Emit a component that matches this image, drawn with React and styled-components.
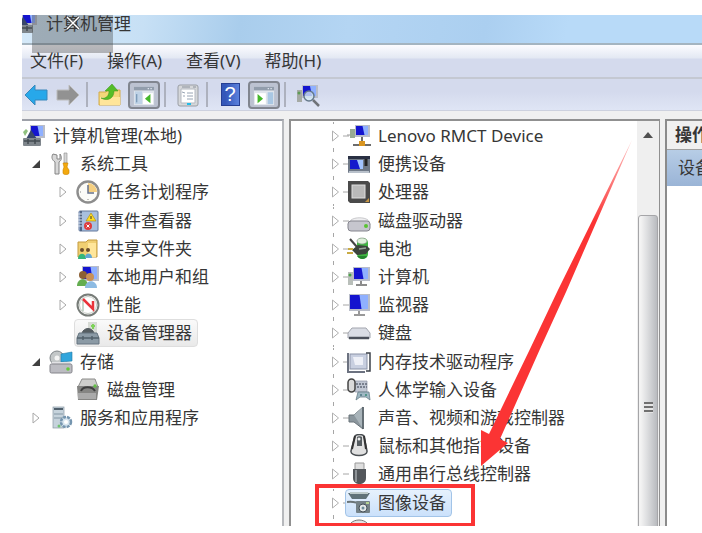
import React, { useState } from 'react';
import styled, { createGlobalStyle } from 'styled-components';

const Svg = ({ children, size = 24 }) => (
  <svg width={size} height={size} viewBox="0 0 24 24" fill="none" aria-hidden="true">{children}</svg>
);

// shared little monitor used by several device icons
const Monitor = ({ x = 8, y = 2, w = 15, h = 12 }) => (
  <g>
    <rect x={x} y={y} width={w} height={h} fill="#b9bdc9" />
    <rect x={x + 1} y={y + 1} width={w - 3} height={h - 3} fill="#1414cf" />
    <path d={`M${x + w / 2} ${y + 1}H${x + w - 2}V${y + h - 2}H${x + w / 2 + 2}z`} fill="#8fb0ff" />
  </g>
);

const icons = {
  computer: (
    <>
      <Monitor x={8} y={1} w={15} h={13} />
      <path d="M4 15l5-9 6 9z" fill="#39476a" />
      <path d="M1 8l3-3 2 2-3 5z" fill="#8fc07f" />
      <rect x="1" y="14" width="18" height="8" rx="1" fill="#7f868c" />
      <path d="M2 17h16M6 15v5M13 15v5" stroke="#444c52" strokeWidth="1.5" />
    </>
  ),
  tools: (
    <>
      <path d="M4 2c-2 3-1 6 2 8v12h4V10c3-2 3-5 1-8v5H8V3z" fill="#d8d8d8" stroke="#858585" />
      <path d="M15 1h3v10h-3z" fill="#d5d5d5" stroke="#8a8a8a" strokeWidth=".6" />
      <path d="M14 11h5l-1 4 2 3v3c0 2-6 2-6 0v-3l1-3z" fill="#f3a90e" stroke="#c98500" strokeWidth=".6" />
    </>
  ),
  clock: (
    <>
      <circle cx="12" cy="12" r="10.5" fill="#fbfbf7" stroke="#8d8d8d" strokeWidth="2.4" />
      <path d="M12 12V3a9 9 0 0 1 9 9z" fill="#f5cf80" />
      <path d="M12 5v8h6" stroke="#65718a" strokeWidth="1.5" />
      <path d="M4 12h1M12 19v1" stroke="#888" />
    </>
  ),
  events: (
    <>
      <rect x="3" y="2" width="19" height="20" rx="1" fill="#a8bfdf" stroke="#65799c" />
      <path d="M5 2v20" stroke="#526585" strokeWidth="2" />
      <path d="M2 5h4M2 8h4M2 11h4M2 14h4M2 17h4" stroke="#d6dfec" />
      <path d="M15 4l5 8H10z" fill="#ffdc22" stroke="#a9880b" strokeWidth=".6" />
      <path d="M15 7v3" stroke="#333" />
      <circle cx="12" cy="17" r="4" fill="#df3c3c" />
      <path d="M10.500 15.500l3 3m0-3l-3 3" stroke="#fff" />
    </>
  ),
  share: (
    <>
      <path d="M2 5h8l2-2h9v17H2z" fill="#f0cf72" stroke="#c49b3e" />
      <path d="M12 6h8v14h-8z" fill="#ffe69a" />
      <circle cx="6" cy="13" r="2" fill="#6b4d2c" />
      <circle cx="12" cy="13" r="2" fill="#6b4d2c" />
      <path d="M2 22c0-7 8-7 8 0z" fill="#35b67b" />
      <path d="M9 21c0-6 7-6 7 0z" fill="#63a7d2" />
    </>
  ),
  users: (
    <>
      <Monitor x={6} y={1} w={17} h={15} />
      <circle cx="7" cy="10" r="4" fill="#8c5f33" />
      <circle cx="14" cy="12" r="4" fill="#c99056" />
      <path d="M1 21c0-9 11-9 11 0z" fill="#64ad50" />
      <path d="M9 23c0-9 12-9 12 0z" fill="#8dbbe3" />
    </>
  ),
  performance: (
    <>
      <circle cx="12" cy="12" r="10.500" fill="#fff" stroke="#777c78" strokeWidth="2" />
      <circle cx="12" cy="12" r="8.500" stroke="#c5cbc4" />
      <path d="M7 18V7" stroke="#8fb19a" strokeWidth="1" />
      <path d="M7 6l10 10V8" stroke="#e9343b" strokeWidth="2.500" />
    </>
  ),
  deviceManager: (
    <>
      <rect x="12" y="1" width="9" height="11" fill="#d7dbd5" />
      <path d="M17 3v5M15 5h4" stroke="#7fd35a" strokeWidth="2" />
      <path d="M6 12c2-6 10-6 12 0" fill="#555d61" stroke="#555d61" />
      <path d="M3 12h18l2 5v6H1v-6z" fill="#8b9aa5" stroke="#667580" />
      <path d="M1 17h22M7 15v4M16 15v4" stroke="#53616b" strokeWidth="1.500" />
    </>
  ),
  storage: (
    <>
      <circle cx="8" cy="8" r="7" fill="#c3c7c8" stroke="#7f8588" />
      <circle cx="8" cy="8" r="2.500" fill="#f4f4f4" />
      <path d="M12 4l11-2v9l-11 1z" fill="#31a5dc" stroke="#227aa6" strokeWidth=".6" />
      <path d="M3 12h18l2 4H1z" fill="#e2e2e5" />
      <rect x="1" y="14" width="22" height="9" rx="1.500" fill="#bcbcc2" stroke="#85858b" />
      <circle cx="19" cy="19" r="1.800" fill="#65c93c" />
    </>
  ),
  diskManage: (
    <>
      <path d="M6 1h13l3 8H2z" fill="#cdcdcb" stroke="#8c8c8a" />
      <path d="M1 8h22l-2 14H2z" fill="#858583" />
      <path d="M5 13c2-5 11-5 14 0" stroke="#3e3e3e" strokeWidth="2" />
      <path d="M2 15h18v6H2z" fill="#aaa" />
      <circle cx="19" cy="8" r="1.700" fill="#63bf46" />
    </>
  ),
  services: (
    <>
      <rect x="4" y="1" width="11" height="21" fill="#c6d3dc" stroke="#8998a4" strokeWidth=".7" />
      <path d="M5 3h9" stroke="#50606d" strokeWidth="2" />
      <path d="M5 8h9M5 12h9" stroke="#8396a4" />
      <circle cx="17" cy="16" r="5" fill="#d7e5ef" stroke="#7595af" strokeWidth="2.500" strokeDasharray="3 1" />
      <circle cx="17" cy="16" r="2" fill="#fff" />
      <circle cx="10" cy="20" r="1.500" fill="#70c370" />
    </>
  ),
  network: (
    <>
      <path d="M0 11h5" stroke="#999" />
      <rect x="3" y="5" width="5" height="9" fill="#97aa94" />
      <Monitor x={8} y={1} w={15} h={12} />
      <path d="M15 13v6M6 21h18" stroke="#3c3c3c" strokeWidth="1.500" />
      <path d="M12 17h6v5h-6z" fill="#d99520" />
    </>
  ),
  portable: (
    <>
      <rect x="1" y="4" width="22" height="17" rx="1" fill="#6f7987" />
      <path d="M1 4h22v3H1z" fill="#293043" />
      <rect x="3" y="8" width="13" height="9" fill="#1418cc" />
      <path d="M10 8h6v9h-3z" fill="#a2c4ff" />
      <path d="M19 7v7" stroke="#222" strokeWidth="3" />
      <path d="M2 20h20" stroke="#b9c1cb" strokeWidth="2" />
    </>
  ),
  cpu: (
    <>
      <path d="M1 1h20l2 2v20H3l-2-2z" fill="#4a4a4a" />
      <rect x="5" y="5" width="13" height="13" fill="#b9b9b9" stroke="#dedede" />
      <path d="M18 22h4v-4z" fill="#c69544" />
    </>
  ),
  drive: (
    <>
      <path d="M4 11c4-3 13-3 17 0l2 5H1z" fill="#eeeef0" stroke="#b6b6ba" strokeWidth=".7" />
      <rect x="1" y="12" width="22" height="10" rx="3" fill="#c6c6ce" stroke="#85858e" />
      <circle cx="19" cy="17" r="2" fill="#5ac333" />
    </>
  ),
  battery: (
    <>
      <rect x="10" y="1" width="11" height="21" rx="5" fill="#3fb541" />
      <ellipse cx="15" cy="4" rx="5" ry="3" fill="#dff0dc" stroke="#8c9a8c" strokeWidth=".7" />
      <path d="M3 2l7 8" stroke="#444" strokeWidth="2" />
      <path d="M5 13l6-5 9 1 3 3-4 5-9 1z" fill="#3c443d" />
      <path d="M1 12h5M0 16h6" stroke="#c9ab44" strokeWidth="2" />
      <path d="M10 19c3 4 8 4 10 0z" fill="#26852f" />
      <path d="M12 12l7-1" stroke="#9aa49c" strokeWidth="1.500" />
    </>
  ),
  pc: (
    <>
      <rect x="1" y="7" width="5" height="13" fill="#b9bfba" />
      <circle cx="3" cy="10" r="1.500" fill="#4ba348" />
      <Monitor x={6} y={2} w={17} h={14} />
      <path d="M14 16v3M9 20h11" stroke="#8c8c8c" strokeWidth="2" />
    </>
  ),
  display: (
    <>
      <Monitor x={2} y={1} w={21} h={17} />
      <path d="M12 18v3M7 22h11" stroke="#999" strokeWidth="2" />
    </>
  ),
  keyboard: (
    <>
      <path d="M5 7h14l4 5v5H1v-5z" fill="#dadde5" stroke="#a2a5ae" />
      <path d="M2 17h20" stroke="#4b505b" strokeWidth="2.500" />
    </>
  ),
  memory: (
    <>
      <path d="M1 3v19h17" stroke="#6c7280" strokeWidth="2" />
      <rect x="3" y="4" width="17" height="15" fill="#c8cfe0" stroke="#8b93a8" />
      <path d="M6 7h10v8H8z" fill="#eef0f7" />
      <path d="M19 3h4v18h-4" stroke="#3d414a" strokeWidth="1.500" />
    </>
  ),
  hid: (
    <>
      <path d="M2 3h18v11H8z" fill="#c1c7d3" stroke="#8990a0" strokeWidth=".7" />
      <path d="M9 6h11M10 9h10" stroke="#636b7a" strokeWidth="1.500" strokeDasharray="2 1" />
      <rect x="1" y="1" width="7" height="13" rx="3.500" fill="#dadada" stroke="#444" strokeWidth="1.500" />
      <path d="M9 22l2-8h11l1 8-4-3h-6z" fill="#9fb8c3" stroke="#687f89" strokeWidth=".8" />
      <circle cx="14" cy="17" r="1" fill="#4b7682" />
      <circle cx="19" cy="17" r="1" fill="#388b75" />
    </>
  ),
  sound: (
    <>
      <path d="M2 9h5l9-8v22l-9-7H2z" fill="#8b969d" stroke="#6a747b" />
      <path d="M7 9l9-8v22z" fill="#a9b4ba" />
      <path d="M16 1v22" stroke="#4d575e" strokeWidth="1.500" />
    </>
  ),
  mouse: (
    <>
      <path d="M8 2c2-2 7-2 9 0l3 15c1 6-17 6-16 0z" fill="#e0e0e0" stroke="#4a4f53" strokeWidth="1.500" />
      <path d="M8 2L5 15M17 2l2 13" stroke="#333" strokeWidth="2" />
      <path d="M10 3c1-1 4-1 5 0v9h-5z" fill="#555c60" />
      <circle cx="12" cy="5" r="1.500" fill="#eee" />
    </>
  ),
  usb: (
    <>
      <path d="M8 1h9v7H8z" fill="#dedede" stroke="#999" />
      <path d="M6 7h13v9c0 8-13 8-13 0z" fill="#53575b" />
      <path d="M9 8v12" stroke="#8d9296" strokeWidth="2" />
    </>
  ),
  imaging: (
    <>
      <path d="M1 2h22l-4 6H5z" fill="#607278" />
      <path d="M3 2h18" stroke="#bdcaca" strokeWidth="2" />
      <path d="M0 11c7-1 9 1 13 1" stroke="#6a7477" strokeWidth="2" />
      <rect x="9" y="10" width="14" height="12" rx="1" fill="#748187" />
      <circle cx="16" cy="17" r="4" fill="#e2e8e8" stroke="#465159" />
      <circle cx="16" cy="17" r="1.500" fill="#6b8b9a" />
      <path d="M19 12h3" stroke="#b4d392" strokeWidth="2" />
    </>
  ),
  other: <path d="M4 4c4-4 12-4 16 0v16H4z" fill="#e3e3e3" stroke="#777" />,
  back: <path d="M1 12L11 2v5h12v10H11v5z" fill="#27a8ea" stroke="#3987bb" />,
  forward: <path d="M23 12L13 2v5H1v10h12v5z" fill="#929292" stroke="#bcbcbc" />,
  up: (
    <>
      <path d="M1 9h7l2-2h12v15H1z" fill="#f3d779" stroke="#d3ab4b" />
      <path d="M2 14h20v8H2z" fill="#ffe59a" />
      <path d="M3 15c6 1 8-3 8-7H7l7-7 6 7h-4c0 7-6 11-13 7z" fill="#55bd27" stroke="#3b9219" strokeWidth=".5" />
    </>
  ),
  paneLeft: (
    <>
      <rect x="1" y="3" width="22" height="20" fill="#dfe4eb" />
      <path d="M1 3h22v4H1z" fill="#929dac" />
      <path d="M16 5h5" stroke="#dee5ed" strokeWidth="1.500" strokeDasharray="1.500" />
      <path d="M2 8h8v14H2z" fill="#bfd2e6" />
      <path d="M4 11v9" stroke="#7d9bb8" strokeWidth="1.500" />
      <path d="M11 10h11v12H11z" fill="#fff" />
      <path d="M19 11v10l-6-5z" fill="#45b72c" />
    </>
  ),
  paneRight: (
    <>
      <rect x="1" y="3" width="22" height="20" fill="#dfe4eb" />
      <path d="M1 3h22v4H1z" fill="#929dac" />
      <path d="M16 5h5" stroke="#dee5ed" strokeWidth="1.500" strokeDasharray="1.500" />
      <path d="M2 10h12v12H2z" fill="#fff" />
      <path d="M5 11v10l6-5z" fill="#45b72c" />
      <path d="M16 9h6v13h-6z" fill="#a9c7e3" />
    </>
  ),
  properties: (
    <>
      <rect x="2" y="2" width="20" height="21" rx="2" fill="#d5d7da" stroke="#9a9ea5" />
      <path d="M5 6h14v14H5z" fill="#fff" stroke="#b4b9c1" />
      <path d="M6 4h8M17 4h3" stroke="#8b929d" />
      <path d="M6 9l3 1M11 10h6M11 13h6M7 13h2M11 16h6" stroke="#98a4b4" />
      <path d="M11 21h4" stroke="#22bce8" strokeWidth="2" />
    </>
  ),
  find: (
    <>
      <rect x="1" y="7" width="5" height="12" fill="#a5aaa4" />
      <circle cx="3" cy="10" r="1.500" fill="#5c9b55" />
      <Monitor x={6} y={2} w={16} h={13} />
      <circle cx="13" cy="13" r="5" fill="#d5e8f5" fillOpacity=".8" stroke="#65798b" strokeWidth="1.500" />
      <path d="M17 17l6 6" stroke="#6f7378" strokeWidth="2.500" />
    </>
  ),
};

const Icon = ({ name, size }) => <Svg size={size}>{icons[name]}</Svg>;

const consoleTree = [
  { level: 0, icon: 'computer', text: '计算机管理(本地)' },
  { level: 1, icon: 'tools', text: '系统工具', state: 'open' },
  { level: 2, icon: 'clock', text: '任务计划程序', state: 'closed' },
  { level: 2, icon: 'events', text: '事件查看器', state: 'closed' },
  { level: 2, icon: 'share', text: '共享文件夹', state: 'closed' },
  { level: 2, icon: 'users', text: '本地用户和组', state: 'closed' },
  { level: 2, icon: 'performance', text: '性能', state: 'closed' },
  { level: 2, icon: 'deviceManager', text: '设备管理器' },
  { level: 1, icon: 'storage', text: '存储', state: 'open' },
  { level: 2, icon: 'diskManage', text: '磁盘管理' },
  { level: 1, icon: 'services', text: '服务和应用程序', state: 'closed' },
];

const devices = [
  { icon: 'network', text: 'Lenovo RMCT Device' },
  { icon: 'portable', text: '便携设备' },
  { icon: 'cpu', text: '处理器' },
  { icon: 'drive', text: '磁盘驱动器' },
  { icon: 'battery', text: '电池' },
  { icon: 'pc', text: '计算机' },
  { icon: 'display', text: '监视器' },
  { icon: 'keyboard', text: '键盘' },
  { icon: 'memory', text: '内存技术驱动程序' },
  { icon: 'hid', text: '人体学输入设备' },
  { icon: 'sound', text: '声音、视频和游戏控制器' },
  { icon: 'mouse', text: '鼠标和其他指针设备' },
  { icon: 'usb', text: '通用串行总线控制器' },
  { icon: 'imaging', text: '图像设备' },
  { icon: 'other', text: '' },
];

const Expander = ({ state }) => (
  <ExpanderBox>
    {state && (
      <svg width="10" height="12" viewBox="0 0 10 12" aria-hidden="true">
        {state === 'open'
          ? <path d="M9 2v8H1z" fill="#404040" />
          : <path d="M2 1l6 5-6 5z" fill="#fff" stroke="#a8a8a8" />}
      </svg>
    )}
  </ExpanderBox>
);

const Branch = () => (
  <BranchBox width="16" height="28" viewBox="0 0 16 28" aria-hidden="true">
    <path d="M4.500 0v2M4.500 26v2M14 14h6" stroke="#a6a6a6" />
    <path d="M3.500 9l6 5-6 5z" fill="#fff" stroke="#b0b0b0" />
  </BranchBox>
);

const App = () => {
  const [node, setNode] = useState('设备管理器');
  const [device, setDevice] = useState('图像设备');

  return (
    <Page>
      <GlobalStyle />
      <Window>
        <TitleBar>
          <TitleIcon><Icon name="computer" /></TitleIcon>
          <Title>计算机管理</Title>
          <Shade>
            <svg width="16" height="16" viewBox="0 0 16 16" aria-hidden="true">
              <path d="M2 2l12 12M14 2L2 14" stroke="#333" strokeWidth="3" />
              <path d="M2 2l12 12M14 2L2 14" stroke="#fff" strokeWidth="1.500" />
            </svg>
          </Shade>
        </TitleBar>

        <MenuBar>
          <MenuItem>文件(F)</MenuItem>
          <MenuItem>操作(A)</MenuItem>
          <MenuItem>查看(V)</MenuItem>
          <MenuItem>帮助(H)</MenuItem>
        </MenuBar>

        <Toolbar>
          <Tool aria-label="后退"><Icon name="back" /></Tool>
          <Tool aria-label="前进"><Icon name="forward" /></Tool>
          <Separator />
          <Tool aria-label="向上"><Icon name="up" /></Tool>
          <Tool aria-label="控制台树" $pressed><Icon name="paneLeft" size={22} /></Tool>
          <Separator />
          <Tool aria-label="属性"><Icon name="properties" /></Tool>
          <Separator />
          <Tool aria-label="帮助"><HelpBadge>?</HelpBadge></Tool>
          <Tool aria-label="操作窗格" $pressed><Icon name="paneRight" size={22} /></Tool>
          <Separator />
          <Tool aria-label="扫描"><Icon name="find" /></Tool>
        </Toolbar>

        <Panes>
          <ConsolePane>
            <ConsoleList>
              {consoleTree.map((item) => (
                <Row key={item.text} $level={item.level}>
                  {item.level > 0 && <Expander state={item.state} />}
                  <Node $selected={node === item.text} onClick={() => setNode(item.text)}>
                    <Icon name={item.icon} />
                    {item.text}
                  </Node>
                </Row>
              ))}
            </ConsoleList>
          </ConsolePane>

          <DevicePane>
            <DeviceList>
              {devices.map((item) => (
                <Row key={item.icon}>
                  <Branch />
                  <Node $device $selected={device === item.text} onClick={() => setDevice(item.text)}>
                    <Icon name={item.icon} />
                    {item.text}
                  </Node>
                </Row>
              ))}
            </DeviceList>
            <ScrollTrack>
              <svg width="10" height="6" viewBox="0 0 10 6" aria-hidden="true">
                <path d="M5 0l5 6H0z" fill="#505050" />
              </svg>
              <Thumb>
                <Grip />
              </Thumb>
            </ScrollTrack>
            <Highlight />
            <Arrow width="160" height="330" viewBox="0 0 160 330" aria-hidden="true">
              <defs>
                <linearGradient id="fade" x1="0" y1="1" x2="0" y2="0">
                  <stop offset="0.75" stopColor="#fb3434" />
                  <stop offset="1" stopColor="#fb3434" stopOpacity="0.3" />
                </linearGradient>
              </defs>
              <path d="M1 326V290l8 4L50 209 78 150 152 0 86 152 60 209 20 299l8 4z" fill="url(#fade)" />
            </Arrow>
          </DevicePane>

          <ActionPane>
            <ActionHead>操作</ActionHead>
            <ActionItem>设备</ActionItem>
          </ActionPane>
        </Panes>
      </Window>
    </Page>
  );
};

export default App;

// Styled-components
const GlobalStyle = createGlobalStyle`
  * {
    box-sizing: border-box;
  }

  body {
    margin: 0;
    background: #ffffff;
    color: #363636;
    font: 17px/24px "Noto Sans", "Noto Sans CJK SC", sans-serif;
  }

  button {
    padding: 0;
    border: 0;
    background: none;
    color: inherit;
    font: inherit;
  }
`;

const Page = styled.div`
  height: 100vh;
  padding: 15px 0 7px 22px;
`;

const Window = styled.main`
  display: flex;
  flex-direction: column;
  height: 100%;
  background: #f0f0f0;
  overflow: hidden;
`;

const TitleBar = styled.header`
  position: relative;
  display: flex;
  align-items: flex-start;
  flex: none;
  height: 30px;
  background: linear-gradient(100deg, #d5e9f9 0%, #c7e0f5 18%, #a9cdec 32%, #b4d5f3 48%, #abcff0 68%, #b8daf8 80%);
  border-bottom: 2px solid #a4b4c0;
`;

const TitleIcon = styled.span`
  display: flex;
  width: 24px;
  margin: -4px 8px 0 -8px;
`;

const Title = styled.h1`
  margin: 0;
  font-size: 17px;
  line-height: 17px;
  font-weight: 400;
`;

const Shade = styled.div`
  position: absolute;
  z-index: 1;
  top: 0;
  left: 10px;
  display: flex;
  justify-content: center;
  width: 81px;
  height: 38px;
  background: rgba(60, 60, 60, 0.35);
`;

const MenuBar = styled.nav`
  display: flex;
  align-items: center;
  flex: none;
  gap: 24px;
  height: 34px;
  padding-left: 8px;
  background: linear-gradient(#fcfcff, #e3e8f3 13px, #d4daed 14px);
  border-bottom: 2px solid #c4c8d2;
`;

const MenuItem = styled.button`
  white-space: nowrap;
`;

const Toolbar = styled.div`
  display: flex;
  align-items: center;
  flex: none;
  gap: 4px;
  height: 32px;
  background: linear-gradient(#d4daed 40%, #dfe5f5);
  border-bottom: 1px solid #cdd1de;
`;

const Tool = styled.button`
  display: flex;
  align-items: center;
  justify-content: center;
  width: ${({ $pressed }) => ($pressed ? 32 : 28)}px;
  height: 28px;
  border: ${({ $pressed }) => ($pressed ? '2px solid #81858f' : '0')};
  border-radius: 4px;
  background: ${({ $pressed }) => ($pressed ? '#bcc2d1' : 'none')};
`;

const HelpBadge = styled.span`
  width: 19px;
  height: 23px;
  border: 1px solid #263f94;
  background: linear-gradient(90deg, #3457b9 20%, #5a80dc);
  color: #ffffff;
  font: 20px/21px "Liberation Sans", sans-serif;
`;

const Separator = styled.span`
  width: 2px;
  height: 25px;
  margin-right: 4px;
  background: #adb1be;
`;

const Panes = styled.div`
  display: flex;
  flex: 1;
  gap: 5px;
  min-height: 0;
  padding-top: 8px;
`;

const ConsolePane = styled.section`
  flex: none;
  width: 262px;
  border-top: 2px solid #9da0a8;
  border-right: 2px solid #b6b8bc;
  background: #ffffff;
  overflow: hidden;
`;

const DevicePane = styled.section`
  position: relative;
  display: flex;
  flex: none;
  width: 371px;
  border: solid #909090;
  border-width: 2px 1px 0 2px;
  background: #ffffff;
  overflow: hidden;
`;

const TreeList = styled.ul`
  display: grid;
  align-content: start;
  grid-auto-rows: 1fr;
  margin: 0;
  padding: 1px 0 0;
  list-style: none;
`;

const ConsoleList = styled(TreeList)`
  height: 311px;
  margin-left: -2px;
`;

const DeviceList = styled(TreeList)`
  flex: 1;
  height: 424px;
  padding-left: 38px;
`;

const Row = styled.li`
  display: flex;
  align-items: center;
  padding-left: ${({ $level = 0 }) => Math.max(0, $level - 1) * 27}px;
`;

const ExpanderBox = styled.span`
  display: flex;
  justify-content: center;
  width: 27px;
  padding-left: 4px;
`;

const BranchBox = styled.svg`
  flex: none;
  overflow: visible;
`;

const Node = styled.button`
  display: flex;
  align-items: center;
  gap: 7px;
  height: 28px;
  padding: 0 5px 0 1px;
  border: 1px solid transparent;
  border-radius: 4px;
  white-space: nowrap;

  ${({ $selected, $device }) => $selected && ($device
    ? 'border-color: #a2c4e8; background: linear-gradient(#e6f1fd, #cbe1fb);'
    : 'border-color: #dedede; background: linear-gradient(#fafafa, #e9e9e9);')}

  svg {
    flex: none;
  }
`;

const ScrollTrack = styled.div`
  display: flex;
  flex-direction: column;
  align-items: center;
  flex: none;
  gap: 77px;
  width: 22px;
  padding-top: 11px;
  background: #efefef;

  > svg {
    flex: none;
  }
`;

const Thumb = styled.div`
  display: flex;
  align-items: center;
  justify-content: center;
  flex: none;
  width: 20px;
  height: 384px;
  border: 1px solid #a5a5a8;
  border-radius: 3px;
  background: linear-gradient(90deg, #f3f3f3 10%, #dddee0 45%, #b9bbbf);
`;

const Grip = styled.span`
  width: 9px;
  height: 11px;
  background: repeating-linear-gradient(#707070 0 2px, #e6e6e6 2px 4px);
`;

const Highlight = styled.div`
  position: absolute;
  top: 363px;
  left: 24px;
  width: 160px;
  height: 43px;
  border: 4px solid #fb3434;
`;

const Arrow = styled.svg`
  position: absolute;
  top: 19px;
  left: 189px;
`;

const ActionPane = styled.aside`
  flex: 1;
  min-width: 0;
  border: solid #8b8b8b;
  border-width: 2px 0 0 2px;
  background: #ffffff;
  overflow: hidden;
  white-space: nowrap;
`;

const ActionHead = styled.h2`
  margin: 0;
  padding: 2px 0 2px 8px;
  border-bottom: 1px solid #a0a0a0;
  background: #f0f0f0;
  font-size: 17px;
  font-weight: 700;
`;

const ActionItem = styled.div`
  height: 36px;
  padding: 6px 0 0 11px;
  background: linear-gradient(#b7cde6, #9ab4d6);
`;
